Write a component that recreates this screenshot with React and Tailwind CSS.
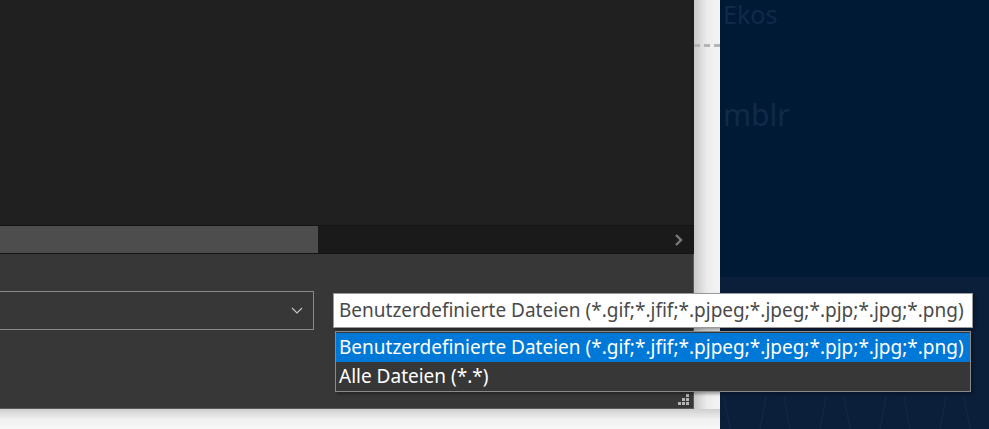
import React from "react";

const font = { fontFamily: '"Noto Sans", "Open Sans", sans-serif' };

function Grip() {
  const dots = [
    [8, 0],
    [4, 4],
    [8, 4],
    [0, 8],
    [4, 8],
    [8, 8],
  ];
  return (
    <svg width="11" height="11" viewBox="0 0 11 11">
      {dots.map(([x, y], i) => (
        <rect key={i} x={x} y={y} width="3" height="3" fill="#b5b5b5" />
      ))}
    </svg>
  );
}

export default function App() {
  const long =
    "Benutzerdefinierte Dateien (*.gif;*.jfif;*.pjpeg;*.jpeg;*.pjp;*.jpg;*.png)";
  return (
    <div
      className="relative w-[989px] h-[429px] overflow-hidden flex bg-[#001a36]"
      style={font}
    >
      {/* left: dialog + strip + bottom shadow */}
      <div className="w-[720px] h-full flex flex-col">
        <div className="flex h-[409px]">
          <div className="w-[694px] h-full flex flex-col">
            <div className="h-[225px] bg-[#202020]" />
            {/* scrollbar */}
            <div className="h-[29px] flex bg-[#1a1a1a] border-y border-[#141414]">
              <div className="w-[318px] bg-[#4d4d4d]" />
              <div className="flex-1" />
              <div className="w-[31px] flex items-center justify-center">
                <svg width="10" height="12" viewBox="0 0 10 12">
                  <path
                    d="M2 1 L7 6 L2 11"
                    fill="none"
                    stroke="#7a7a7a"
                    strokeWidth="2.4"
                  />
                </svg>
              </div>
            </div>
            {/* bottom panel */}
            <div className="flex-1 bg-[#373737] border-b border-r border-[#5a5a5a] flex flex-col">
              <div className="h-[37px]" />
              <div className="flex">
                <div className="w-[314px] h-[39px] border border-l-0 border-[#8a8a8a] flex items-center justify-end pr-[10px]">
                  <svg width="12" height="7" viewBox="0 0 12 7">
                    <path
                      d="M1 1 L6 6 L11 1"
                      fill="none"
                      stroke="#c8c8c8"
                      strokeWidth="1.1"
                    />
                  </svg>
                </div>
              </div>
              <div className="flex-1 flex items-end justify-end pr-[4px] pb-[3px]">
                <Grip />
              </div>
            </div>
          </div>
          {/* light strip */}
          <div className="w-[26px] h-full bg-gradient-to-r from-[#c9c9c9] via-[#ececec] to-[#f4f4f4] flex flex-col">
            <div className="h-[44px]" />
            <div className="h-[3px] border-t-[3px] border-dashed border-[#b4b4b4]" />
          </div>
        </div>
        <div className="flex-1 bg-gradient-to-b from-[#cfcfcf] via-[#f0f0f0] to-[#f7f7f7]" />
      </div>

      {/* right navy area */}
      <div className="flex-1 h-full flex flex-col">
        <div className="h-[277px] bg-[#001a36] pl-[3px] flex flex-col">
          <div className="text-[25px] leading-[28px] text-[#12294a]">Ekos</div>
          <div className="h-[69px]" />
          <div className="text-[30px] leading-[36px] text-[#12294a]">mblr</div>
        </div>
        <div className="flex-1 bg-[#0b1f3b] relative">
          <svg className="absolute left-0 bottom-0" width="269" height="40" viewBox="0 0 269 40">
            {[10, 40, 70, 100, 130, 160, 190, 220, 250].map((x, i) => (
              <path
                key={i}
                d={`M${x} 40 L${x + (i % 2 ? 6 : -6)} 8`}
                stroke="#142a48"
                strokeWidth="1"
              />
            ))}
          </svg>
        </div>
      </div>

      {/* combobox overlay */}
      <div className="absolute left-[333px] top-[293px] w-[640px] h-[35px] bg-white border border-[#9a9a9a] shadow-[2px_2px_3px_rgba(0,0,0,0.35)] flex items-center pl-[5px]">
        <span className="text-[19px] text-[#4a4a4a] whitespace-nowrap">{long}</span>
      </div>

      {/* dropdown list overlay */}
      <div className="absolute left-[335px] top-[331px] w-[636px] h-[61px] bg-[#373737] border border-[#8a8a8a] shadow-[2px_2px_3px_rgba(0,0,0,0.35)] flex flex-col pt-[1px]">
        <div className="h-[29px] bg-[#0078d7] flex items-center pl-[3px]">
          <span className="text-[19px] text-white whitespace-nowrap">{long}</span>
        </div>
        <div className="h-[29px] flex items-center pl-[3px]">
          <span className="text-[19px] text-white whitespace-nowrap">Alle Dateien (*.*)</span>
        </div>
      </div>
    </div>
  );
}
